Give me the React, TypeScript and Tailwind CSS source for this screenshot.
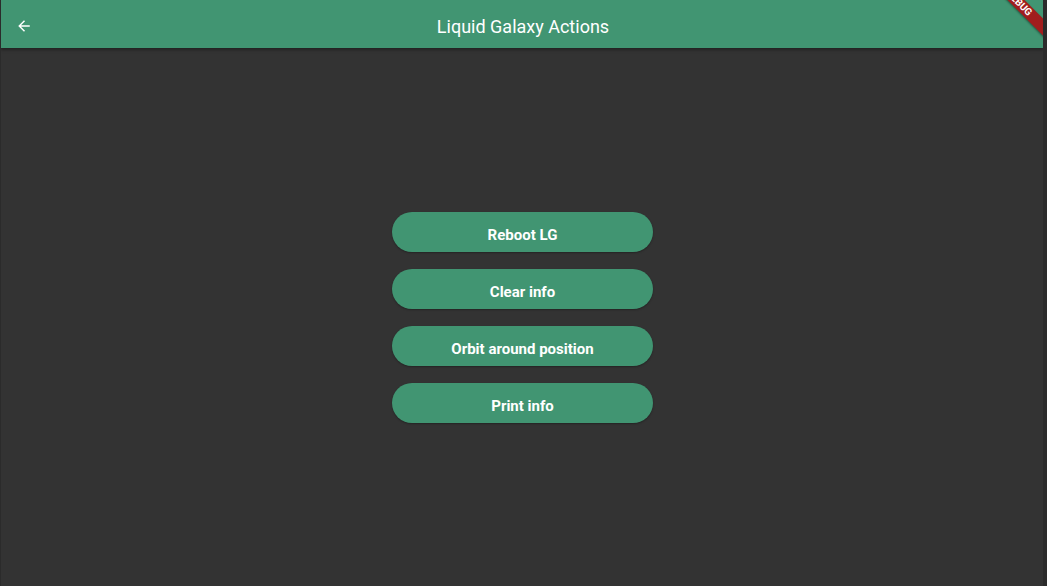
import React from "react";

const buttons = ["Reboot LG", "Clear info", "Orbit around position", "Print info"];

export default function App() {
  return (
    <div
      className="w-[1047px] h-[586px] overflow-hidden bg-[#2b2b2b] pl-[1px] pr-[4px]"
      style={{ fontFamily: "Roboto, 'Noto Sans', sans-serif" }}
    >
      <div className="relative w-full h-full overflow-hidden bg-[#333333] flex flex-col">
        <div className="h-[48px] bg-[#419572] flex items-center relative shrink-0 shadow-[0_2px_3px_rgba(0,0,0,0.35)] z-10">
          <div className="w-[46px] flex items-center justify-center">
            <svg width="24" height="24" viewBox="0 0 24 24" className="mt-[4px]">
              <path
                d="M20 11H7.83l5.59-5.59L12 4l-8 8 8 8 1.41-1.41L7.83 13H20v-2z"
                fill="#ffffff"
                transform="translate(12 12) scale(0.72) translate(-12 -12)"
              />
            </svg>
          </div>
          <div className="absolute inset-0 flex items-center justify-center pointer-events-none">
            <span className="text-white text-[18px] leading-none mt-[6px] ml-[2px]">Liquid Galaxy Actions</span>
          </div>
        </div>
        <div className="flex-1 flex flex-col items-center justify-center gap-[17px]">
          {buttons.map((b) => (
            <div
              key={b}
              className="w-[261px] h-[40px] rounded-full bg-[#419572] flex items-center justify-center text-white font-bold text-[15px] shadow-[0_1px_2px_rgba(0,0,0,0.3)]"
            >
              <span className="mt-[8px] ml-[1px]">{b}</span>
            </div>
          ))}
        </div>
        <div className="absolute left-[968px] top-[-3px] w-[100px] h-[12px] bg-[#a11d1d] rotate-45 flex items-center justify-center z-20 shadow-[0_1px_2px_rgba(0,0,0,0.4)]">
          <span className="text-white text-[10px] font-bold leading-none">DEBUG</span>
        </div>
      </div>
    </div>
  );
}
